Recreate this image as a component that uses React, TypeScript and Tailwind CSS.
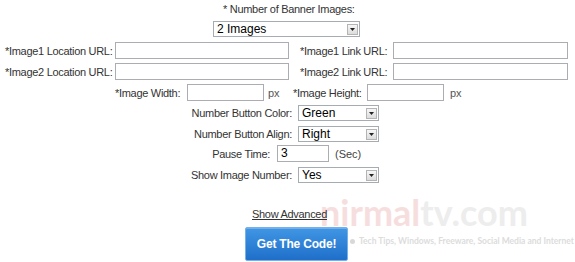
import React from 'react';

const label = 'text-[11px] leading-[14px] text-[#333] whitespace-nowrap tracking-[-0.3px]';

const TextBox: React.FC<{ w: string; value?: string }> = ({ w, value }) => (
  <div
    className={`${w} h-[17px] shrink-0 border border-[#abadb3] bg-white px-[3px] text-[12px] leading-[15px] text-black`}
    style={{ fontFamily: 'Arial, "Liberation Sans", sans-serif' }}
  >
    {value}
  </div>
);

const DropDown: React.FC<{ w: string; value: string }> = ({ w, value }) => (
  <div
    className={`${w} h-[16px] shrink-0 border border-[#a5acb2] bg-white flex items-center justify-between pl-[3px] pr-[1px]`}
  >
    <span className="text-[12px] leading-[14px] text-black" style={{ fontFamily: 'Arial, "Liberation Sans", sans-serif' }}>
      {value}
    </span>
    <span className="w-[11px] h-[11px] border border-[#b4b4b4] bg-gradient-to-b from-[#f7f7f7] to-[#dcdcdc] flex items-center justify-center">
      <svg width="5" height="3" viewBox="0 0 5 3">
        <path d="M0 0h5L2.5 3z" fill="#222" />
      </svg>
    </span>
  </div>
);

export default function App() {
  return (
    <div
      className="relative w-[575px] h-[262px] overflow-hidden bg-white"
      style={{ fontFamily: 'Tahoma, "Liberation Sans", Arial, sans-serif' }}
    >
      {/* watermark */}
      <div
        className="absolute left-[320px] top-[192px] text-[36px] leading-[40px] font-bold select-none"
        style={{ fontFamily: 'Lato, "Open Sans", sans-serif' }}
      >
        <span className="text-[#f7dede]">nirmal</span>
        <span className="text-[#ededed]">tv.com</span>
      </div>
      <div className="absolute left-[350px] top-[236px] flex items-center gap-[4px] select-none">
        <span className="w-[5px] h-[5px] rounded-full bg-[#d8d8d8]" />
        <span className="whitespace-nowrap text-[8.5px] leading-[10px] font-bold text-[#dcdcdc]" style={{ fontFamily: 'Lato, "Open Sans", sans-serif' }}>
          Tech Tips, Windows, Freeware, Social Media and Internet
        </span>
      </div>

      <div className="relative flex flex-col">
        <div className={`${label} mt-[2px] pl-[223px]`}>* Number of Banner Images:</div>

        <div className="mt-[5px] pl-[213px] flex">
          <DropDown w="w-[147px]" value="2 Images" />
        </div>

        <div className="mt-[5px] flex items-center">
          <div className={`${label} w-[115px] shrink-0 pl-[5px]`}>*Image1 Location URL:</div>
          <TextBox w="w-[174px]" />
          <div className={`${label} w-[104px] shrink-0 pl-[11px]`}>*Image1 Link URL:</div>
          <TextBox w="w-[175px]" />
        </div>

        <div className="mt-[4px] flex items-center">
          <div className={`${label} w-[115px] shrink-0 pl-[5px]`}>*Image2 Location URL:</div>
          <TextBox w="w-[174px]" />
          <div className={`${label} w-[104px] shrink-0 pl-[11px]`}>*Image2 Link URL:</div>
          <TextBox w="w-[175px]" />
        </div>

        <div className="mt-[4px] flex items-center pl-[115px]">
          <div className={`${label} w-[72px] shrink-0`}>*Image Width:</div>
          <TextBox w="w-[77px]" />
          <div className="w-[29px] shrink-0 pl-[4px] text-[11px] leading-[14px] text-[#555]">px</div>
          <div className={`${label} w-[74px] shrink-0`}>*Image Height:</div>
          <TextBox w="w-[77px]" />
          <div className="pl-[6px] text-[11px] leading-[14px] text-[#555]">px</div>
        </div>

        <div className="mt-[4px] flex items-center">
          <div className={`${label} w-[292px] shrink-0 text-right`}>Number Button Color:</div>
          <div className="pl-[6px] flex">
            <DropDown w="w-[81px]" value="Green" />
          </div>
        </div>

        <div className="mt-[5px] flex items-center">
          <div className={`${label} w-[292px] shrink-0 text-right`}>Number Button Align:</div>
          <div className="pl-[6px] flex">
            <DropDown w="w-[81px]" value="Right" />
          </div>
        </div>

        <div className="mt-[3px] flex items-center">
          <div className={`${label} w-[270px] shrink-0 text-right`}>Pause Time:</div>
          <div className="pl-[7px] flex">
            <TextBox w="w-[52px]" value="3" />
          </div>
          <div className="pl-[6px] text-[11px] leading-[14px] text-[#444]">(Sec)</div>
        </div>

        <div className="mt-[5px] flex items-center">
          <div className={`${label} w-[292px] shrink-0 text-right`}>Show Image Number:</div>
          <div className="pl-[6px] flex">
            <DropDown w="w-[81px]" value="Yes" />
          </div>
        </div>

        <div className="mt-[24px] pl-[252px] flex">
          <a href="#" className="relative text-[11px] leading-[14px] text-[#333] underline tracking-[-0.3px]">
            Show Advanced
          </a>
        </div>

        <div className="mt-[6px] pl-[245px] flex">
          <button
            type="button"
            className="w-[103px] h-[34px] rounded-[2px] border border-[#74b0ec] bg-gradient-to-b from-[#4096e4] to-[#1f6fca] text-white text-[12px] font-bold tracking-[-0.2px] shadow-[inset_0_1px_0_rgba(255,255,255,0.25)]"
          >
            Get The Code!
          </button>
        </div>
      </div>
    </div>
  );
}
